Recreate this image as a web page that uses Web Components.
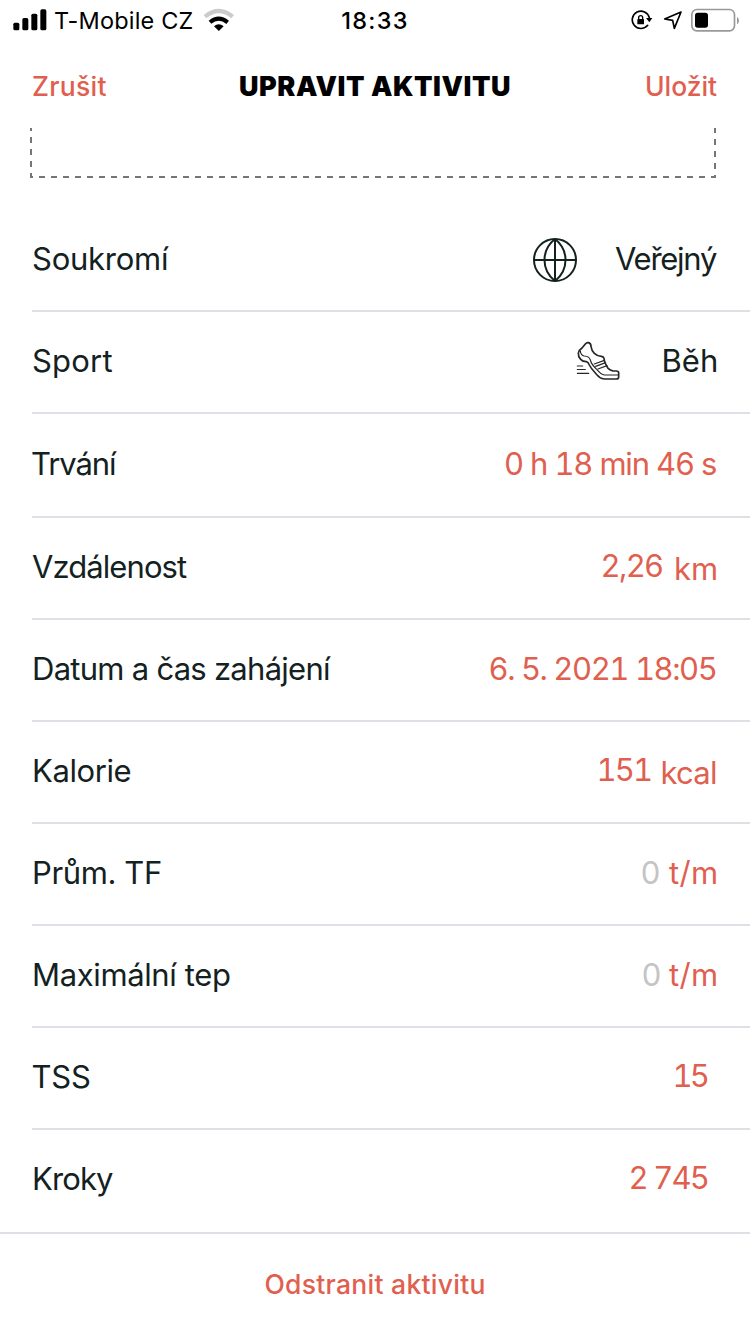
<!DOCTYPE html>
<html lang="cs">
<head>
<meta charset="utf-8">
<title>Upravit aktivitu</title>
<style>
  body {
    margin: 0;
    background: #fff;
    color: #13211f;
    font-family: Inter, "Liberation Sans", sans-serif;
    --accent: #e05f4f;
    --line: #dfdfe5;
  }
</style>
</head>
<body>
<edit-screen>
  <status-bar slot="status"></status-bar>
  <nav-bar slot="nav">
    <fit-text slot="left" width="73.5">Zrušit</fit-text>
    <fit-text slot="title" width="270">UPRAVIT AKTIVITU</fit-text>
    <fit-text slot="right" width="70">Uložit</fit-text>
  </nav-bar>
  <photo-box></photo-box>
  <form-row plain>
    <fit-text slot="label" width="136" style="margin-left: 1px">Soukromí</fit-text>
    <app-icon name="globe" style="margin-right: 38px"></app-icon>
    <fit-text width="102">Veřejný</fit-text>
  </form-row>
  <form-row plain>
    <fit-text slot="label" width="79.5" style="margin-left: 1px">Sport</fit-text>
    <app-icon name="shoe" style="margin-right: 43.5px; padding-bottom: 2px"></app-icon>
    <fit-text width="52.5" style="margin-right: 1px">Běh</fit-text>
  </form-row>
  <form-row style="--row-height: 104px">
    <fit-text slot="label" width="85">Trvání</fit-text>
    <fit-text width="211">0 h 18 min 46 s</fit-text>
  </form-row>
  <form-row>
    <fit-text slot="label" width="155">Vzdálenost</fit-text>
    <fit-text width="60.5" style="padding-bottom: 2px; margin-right: 13px">2,26</fit-text>
    <fit-text width="40" style="padding-top: 4px">km</fit-text>
  </form-row>
  <form-row>
    <fit-text slot="label" width="297" style="margin-left: 2px">Datum a čas zahájení</fit-text>
    <fit-text width="226.5">6. 5. 2021 18:05</fit-text>
  </form-row>
  <form-row>
    <fit-text slot="label" width="96.5" style="margin-left: 2px">Kalorie</fit-text>
    <fit-text width="53" style="padding-bottom: 2px; margin-right: 12px">151</fit-text>
    <fit-text width="53.5" style="padding-top: 4px">kcal</fit-text>
  </form-row>
  <form-row>
    <fit-text slot="label" width="127" style="margin-left: 2px">Prům. TF</fit-text>
    <fit-text width="15.5" style="color: #c4c4c4; margin-right: 12px">0</fit-text>
    <fit-text width="47">t/m</fit-text>
  </form-row>
  <form-row>
    <fit-text slot="label" width="196" style="margin-left: 2px">Maximální tep</fit-text>
    <fit-text width="15.5" style="color: #c4c4c4; margin-right: 11px">0</fit-text>
    <fit-text width="47">t/m</fit-text>
  </form-row>
  <form-row>
    <fit-text slot="label" width="57.5" style="margin-left: 0.5px">TSS</fit-text>
    <fit-text width="34.5" style="padding-bottom: 2px; margin-right: 8px">15</fit-text>
  </form-row>
  <form-row last>
    <fit-text slot="label" width="79" style="margin-left: 2px">Kroky</fit-text>
    <fit-text width="77.5" style="padding-bottom: 2px; margin-right: 8px">2 745</fit-text>
  </form-row>
  <delete-bar slot="footer"><fit-text width="219">Odstranit aktivitu</fit-text></delete-bar>
</edit-screen>

<script>
// Icon drawings: size of the box, viewBox and content
const ICONS = {
  signal: {
    w: 34, h: 22, box: '38 26 102 66',
    art: `<g fill="#000"><rect x="39" y="67" width="18" height="23" rx="5"/><rect x="66" y="53" width="18" height="37" rx="5"/>
      <rect x="93" y="40" width="18" height="50" rx="5"/><rect x="120" y="27" width="18" height="63" rx="5"/></g>`
  },
  wifi: {
    w: 30, h: 24, box: '611 24 90 72',
    art: `<g fill="none"><path d="M614 50Q655 16 697 50" stroke="#cbcbcb" stroke-width="13"/>
      <path d="M629 67Q655 45 682 67" stroke="#000" stroke-width="12"/></g>
      <path d="M641 79Q655 66 670 79L655.500 93Z" fill="#000"/>`
  },
  lock: {
    w: 22, h: 22, box: '95 28 66 66',
    art: `<path d="M150 54A26 26 0 1 0 145 77" fill="none" stroke="#000" stroke-width="5" stroke-linecap="round"/>
      <path d="M140 55h19l-9 13Z" fill="#000"/>
      <rect x="114" y="58" width="20" height="16" rx="2" fill="#000"/>
      <path d="M118 59v-5a6 6 0 0 1 12 0v5" fill="none" stroke="#000" stroke-width="4"/>`
  },
  location: {
    w: 20, h: 20, box: '190 32 60 60',
    art: `<path d="M244 38L195 59L219 63L224 87Z" fill="none" stroke="#000" stroke-width="5" stroke-linejoin="round"/>`
  },
  battery: {
    w: 48, h: 24, box: '273 22 144 72',
    art: `<rect x="275.500" y="26.500" width="128" height="64" rx="15" fill="none" stroke="#999" stroke-width="5"/>
      <rect x="285" y="36" width="39" height="45" rx="8" fill="#000"/><path d="M411 48Q417 52 417 59.500T411 71Z" fill="#999"/>`
  },
  globe: {
    w: 44, h: 44, box: '0 0 44 44',
    art: `<g fill="none" stroke="#13211f" stroke-width="2"><circle cx="22" cy="22" r="21"/>
      <path d="M22 1V43M1 22H43M22 1C8 12 8 32 22 43C36 32 36 12 22 1"/></g>`
  },
  shoe: {
    w: 44, h: 40, box: '75 63 132 120',
    art: `<g fill="none" stroke="#262626" stroke-linecap="round" stroke-linejoin="round">
      <path stroke-width="5" d="M112 68Q107 67 103 72L93 84Q83 91 82 99Q81 109 89 118Q95 125 106 125Q112 126 115 135Q120 145 133 159Q144 172 151 175Q155 177 162 177H195Q203 177 203 170V159Q203 153 196 153H186Q175 150 171 145L163 130Q160 123 159 115Q158 110 151 109Q140 109 130 100Q122 93 120 79Q120 70 112 68Z"/>
      <path stroke-width="3.500" d="M88 93Q89 106 100 108Q115 109 118 120Q121 133 137 148Q151 164 160 165H202"/>
      <path stroke-width="3.500" d="M130 132L160 121M134 139L164 128M141 147L168 137"/>
      <path stroke-width="3.500" d="M79 138H95M79 148.500H103M79 160H113"/></g>`
  }
};

class AppIcon extends HTMLElement {
  constructor() {
    super();
    this.attachShadow({ mode: 'open' });
  }

  connectedCallback() {
    const icon = ICONS[this.getAttribute('name')];
    this.shadowRoot.innerHTML = `
      <style>
        :host { display: block; flex: none; }
        svg { display: block; }
      </style>
      <svg width="${icon.w}" height="${icon.h}" viewBox="${icon.box}">${icon.art}</svg>`;
  }
}

/*
  One line of text, tracked so that its visible ink is exactly `width` pixels wide.
  The side bearings are cut off, so margins start at the ink.
*/
class FitText extends HTMLElement {
  constructor() {
    super();
    this.attachShadow({ mode: 'open' });
    this.shadowRoot.innerHTML = `
      <style>
        :host { display: block; flex: none; }
        span { display: block; width: max-content; white-space: pre; padding-bottom: var(--lift, 0); }
      </style>
      <span><slot></slot></span>`;
  }

  connectedCallback() {
    const text = this.textContent;
    const width = Number(this.getAttribute('width'));
    const font = getComputedStyle(this);
    const span = this.shadowRoot.querySelector('span');

    // bearings come from the canvas, the advance from the laid out text (it knows tabular digits)
    const ctx = document.createElement('canvas').getContext('2d');
    ctx.font = `${font.fontWeight} ${font.fontSize} ${font.fontFamily}`;
    const m = ctx.measureText(text);
    const left = -m.actualBoundingBoxLeft;
    const right = m.width - m.actualBoundingBoxRight;
    const ink = span.getBoundingClientRect().width - left - right;

    this.style.width = width + 'px';
    span.style.marginLeft = -left + 'px';
    if (text.length > 1) {
      span.style.letterSpacing = (width - ink) / (text.length - 1) + 'px';
    }
  }
}

class StatusBar extends HTMLElement {
  constructor() {
    super();
    this.attachShadow({ mode: 'open' });
    this.shadowRoot.innerHTML = `
      <style>
        :host {
          display: grid;
          grid-template-columns: 1fr auto 1fr;
          align-items: center;
          height: 40px;
          padding: 0 14px 0 13px;
          box-sizing: border-box;
          color: #000;
          font-size: 23.500px;
          line-height: 36px;
        }
        div { display: flex; align-items: center; }
        fit-text { padding-top: 2px; }
        .right { justify-content: flex-end; margin-right: -3px; }
        .time { font-weight: 500; }
      </style>
      <div>
        <app-icon name="signal" style="margin-right: 8px"></app-icon>
        <fit-text width="137.5">T-Mobile CZ</fit-text>
        <app-icon name="wifi" style="margin-left: 11px"></app-icon>
      </div>
      <fit-text class="time" width="64.5">18:33</fit-text>
      <div class="right">
        <app-icon name="lock" style="margin-right: 10px"></app-icon>
        <app-icon name="location" style="margin-right: 8px"></app-icon>
        <app-icon name="battery"></app-icon>
      </div>`;
  }
}

class NavBar extends HTMLElement {
  constructor() {
    super();
    this.attachShadow({ mode: 'open' });
    this.shadowRoot.innerHTML = `
      <style>
        :host {
          display: grid;
          grid-template-columns: 1fr auto 1fr;
          height: 88px;
          padding: 5px 33px 0;
          box-sizing: border-box;
          font-size: 26.500px;
          font-weight: 500;
          line-height: 83px;
          color: var(--accent);
        }
        ::slotted([slot="title"]) { color: #000; font-size: 27px; font-weight: 900; }
        ::slotted([slot="right"]) { justify-self: end; }
      </style>
      <slot name="left"></slot>
      <slot name="title"></slot>
      <slot name="right"></slot>`;
  }
}

// Bottom part of the photo drop area, scrolled under the header
class PhotoBox extends HTMLElement {
  constructor() {
    super();
    this.attachShadow({ mode: 'open' });
    this.shadowRoot.innerHTML = `
      <style>
        :host { display: block; height: 82px; }
        svg { display: block; }
      </style>
      <svg width="750" height="52">
        <path d="M31 -3V49H715V-3" fill="none" stroke="#72777c" stroke-width="2" stroke-dasharray="6 6"/>
      </svg>`;
  }
}

class FormRow extends HTMLElement {
  constructor() {
    super();
    this.attachShadow({ mode: 'open' });
    this.shadowRoot.innerHTML = `
      <style>
        :host {
          --lift: 2px;
          display: flex;
          align-items: center;
          height: var(--row-height, 102px);
          box-sizing: border-box;
          margin-left: 32px;
          padding-right: 34px;
          border-bottom: 2px solid var(--line);
          font-size: 31px;
          line-height: 40px;
        }
        :host([last]) { border-bottom-color: transparent; }
        .value {
          display: flex;
          align-items: center;
          margin-left: auto;
          color: var(--accent);
          font-variant-numeric: tabular-nums;
        }
        :host([plain]) { padding-right: 33px; }
        :host([plain]) .value { color: inherit; }
      </style>
      <slot name="label"></slot>
      <div class="value"><slot></slot></div>`;
  }
}

class DeleteBar extends HTMLElement {
  constructor() {
    super();
    this.attachShadow({ mode: 'open' });
    this.shadowRoot.innerHTML = `
      <style>
        :host {
          display: flex;
          justify-content: center;
          align-items: center;
          height: 102px;
          box-sizing: border-box;
          border-top: 2px solid var(--line);
          font-size: 26.500px;
          font-weight: 500;
          color: var(--accent);
        }
      </style>
      <slot></slot>`;
  }
}

class EditScreen extends HTMLElement {
  constructor() {
    super();
    this.attachShadow({ mode: 'open' });
    this.shadowRoot.innerHTML = `
      <style>
        :host {
          display: flex;
          flex-direction: column;
          width: 750px;
          height: 1334px;
          overflow: hidden;
        }
        main { flex: 1; }
      </style>
      <slot name="status"></slot>
      <slot name="nav"></slot>
      <main><slot></slot></main>
      <slot name="footer"></slot>`;
  }
}

// containers first, so fonts are inherited when the texts are measured
customElements.define('edit-screen', EditScreen);
customElements.define('status-bar', StatusBar);
customElements.define('nav-bar', NavBar);
customElements.define('photo-box', PhotoBox);
customElements.define('form-row', FormRow);
customElements.define('delete-bar', DeleteBar);
customElements.define('app-icon', AppIcon);
customElements.define('fit-text', FitText);
</script>
</body>
</html>
